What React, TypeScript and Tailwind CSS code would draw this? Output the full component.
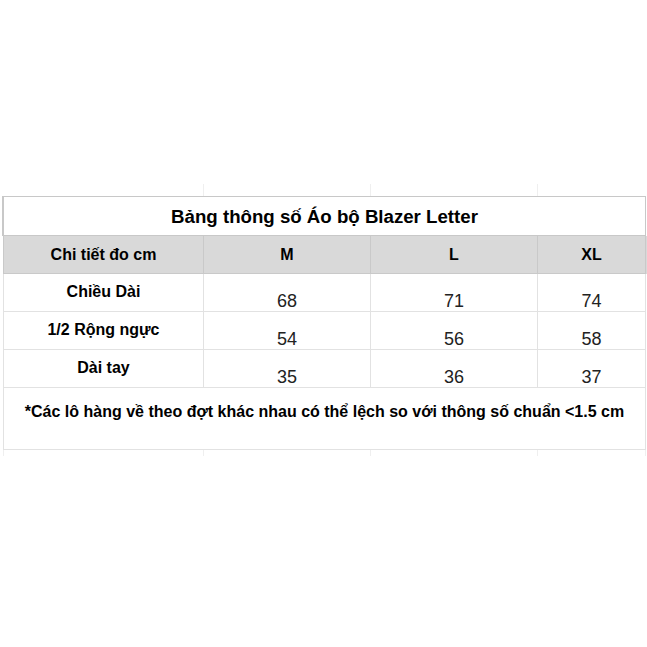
const rows = [
  { label: 'Chiều Dài', values: ['68', '71', '74'] },
  { label: '1/2 Rộng ngực', values: ['54', '56', '58'] },
  { label: 'Dài tay', values: ['35', '36', '37'] },
];

const sizes = ['M', 'L', 'XL'];

export default function App() {
  return (
    <div
      className="w-[647px] h-[647px] bg-white text-black"
      style={{ fontFamily: '"Liberation Sans", Arial, sans-serif' }}
    >
      {/* faint sheet grid above the table */}
      <div className="pt-[184px]">
        <div className="ml-[3px] grid grid-cols-[201px_167px_167px_108px] h-[12px]">
          <div className="border-r border-[#efefef]" />
          <div className="border-r border-[#efefef]" />
          <div className="border-r border-[#efefef]" />
          <div />
        </div>
      </div>

      {/* Title */}
      <div className="ml-[2px] w-[644px] h-[40px] border-t border-b border-r border-l-2 border-[#c8c8c8] flex items-center justify-center">
        <span className="text-[18.67px] font-bold leading-none pt-[2px]">
          Bảng thông số Áo bộ Blazer Letter
        </span>
      </div>

      {/* Header */}
      <div className="ml-[3px] grid grid-cols-[201px_167px_167px_108px] h-[38px] bg-[#d9d9d9]">
        <div className="border-l border-r border-b border-[#c9c9c9] flex items-center justify-center text-[16px] font-bold">
          Chi tiết đo cm
        </div>
        {sizes.map((s) => (
          <div
            key={s}
            className="border-r border-b border-[#c9c9c9] flex items-center justify-center text-[16px] font-bold"
          >
            {s}
          </div>
        ))}
      </div>

      {/* Rows */}
      {rows.map((row) => (
        <div
          key={row.label}
          className="ml-[3px] grid grid-cols-[201px_167px_167px_108px] h-[38px]"
        >
          <div className="border-l border-r border-b border-[#e2e2e2] flex items-center justify-center text-[16px] font-bold pb-[1px]">
            {row.label}
          </div>
          {row.values.map((v, i) => (
            <div
              key={i}
              className="border-r border-b border-[#e2e2e2] flex items-end justify-center text-[18px] leading-none text-[#222] pb-[1px]"
            >
              {v}
            </div>
          ))}
        </div>
      ))}

      {/* Note */}
      <div className="ml-[3px] w-[643px] h-[62px] border-l border-r border-b border-[#e2e2e2] flex justify-center pt-[12px] text-[16px] font-bold">
        *Các lô hàng về theo đợt khác nhau có thể lệch so với thông số chuẩn &lt;1.5 cm
      </div>

      {/* faint sheet grid below */}
      <div className="ml-[3px] grid grid-cols-[201px_167px_167px_108px] h-[6px]">
        <div className="border-l border-r border-[#efefef]" />
        <div className="border-r border-[#efefef]" />
        <div className="border-r border-[#efefef]" />
        <div className="border-r border-[#efefef]" />
      </div>
    </div>
  );
}
